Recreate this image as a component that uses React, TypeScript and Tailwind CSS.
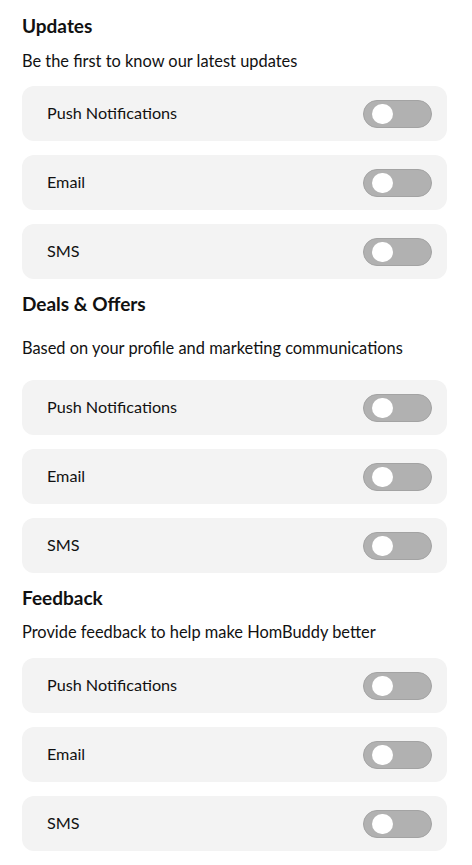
const sections = [
  {
    title: 'Updates',
    subtitle: 'Be the first to know our latest updates',
    titleGap: 'mt-[11px]',
    listGap: 'mt-[13px]',
  },
  {
    title: 'Deals & Offers',
    subtitle: 'Based on your profile and marketing communications',
    titleGap: 'mt-[20px]',
    listGap: 'mt-[20px]',
  },
  {
    title: 'Feedback',
    subtitle: 'Provide feedback to help make HomBuddy better',
    titleGap: 'mt-[10px]',
    listGap: 'mt-[14px]',
  },
];

const channels = ['Push Notifications', 'Email', 'SMS'];

function Toggle() {
  return (
    <div className="flex h-[28px] w-[69px] items-center rounded-full border border-[#a3a3a3] bg-[#b1b1b1] pl-[8px]">
      <div className="h-[20px] w-[21px] rounded-full bg-white" />
    </div>
  );
}

export default function App() {
  return (
    <div
      className="min-h-screen bg-white px-[22px] pt-[14px] text-[#111]"
      style={{ fontFamily: 'Lato, "Noto Sans", sans-serif' }}
    >
      {sections.map((section, i) => (
        <section key={section.title} className={i > 0 ? 'mt-[13px]' : ''}>
          <h2 className="text-[19px] font-bold leading-[24px]">{section.title}</h2>
          <p className={`${section.titleGap} text-[16.4px] leading-[24px]`}>{section.subtitle}</p>
          <div className={`${section.listGap} flex flex-col gap-[14px] pr-[3px]`}>
            {channels.map((channel) => (
              <div
                key={channel}
                className="flex h-[55px] items-center justify-between rounded-[12px] bg-[#f3f3f3] pl-[25px] pr-[15px]"
              >
                <span className="text-[16.2px]">{channel}</span>
                <Toggle />
              </div>
            ))}
          </div>
        </section>
      ))}
    </div>
  );
}
